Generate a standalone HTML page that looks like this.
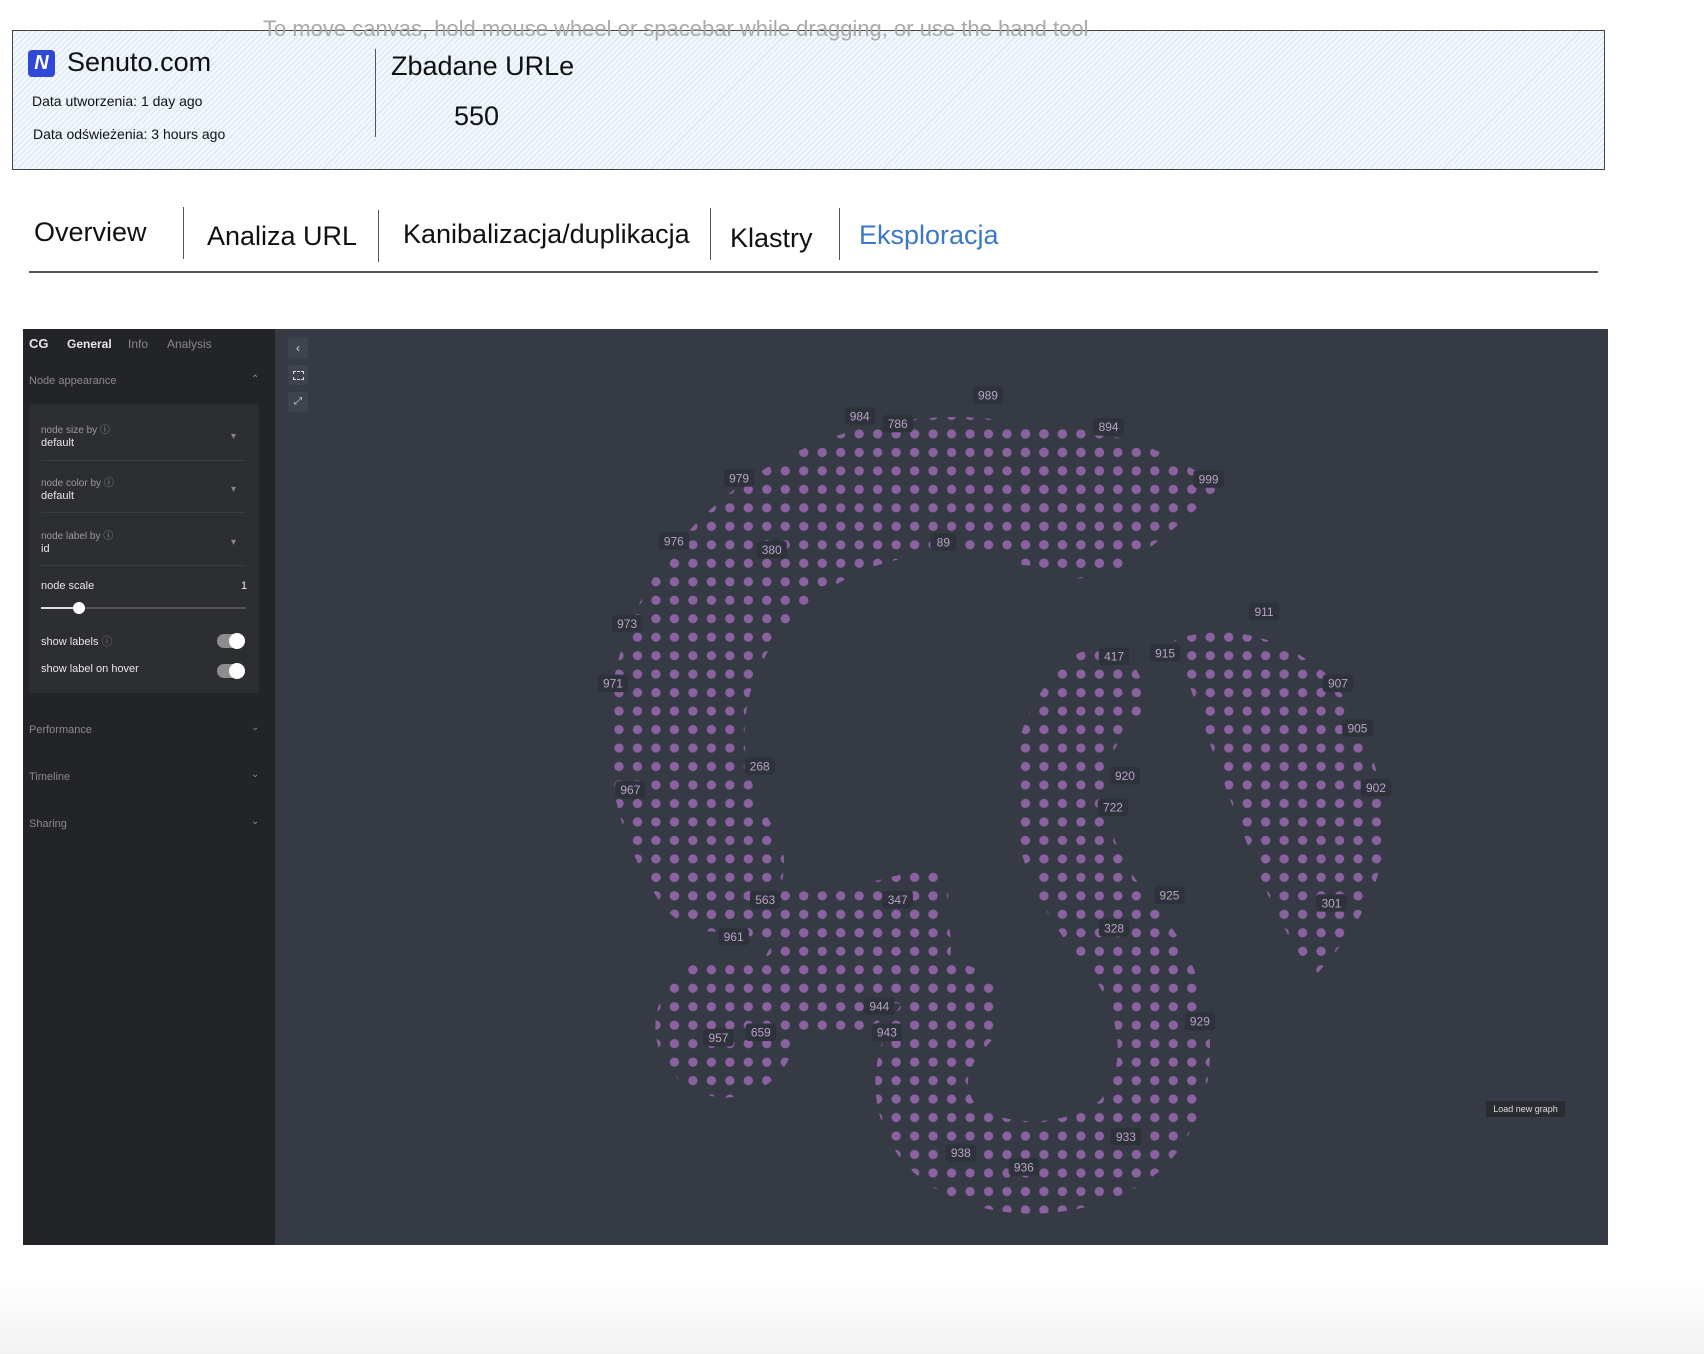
<!DOCTYPE html>
<html><head><meta charset="utf-8"><style>
*{margin:0;padding:0;box-sizing:border-box}
body{width:1704px;height:1354px;position:relative;overflow:hidden;background:linear-gradient(#fff 0,#fff 1280px,#f2f2f2 1354px);font-family:"Liberation Sans",sans-serif}
.a{position:absolute;white-space:nowrap}
#hdr{position:absolute;left:12px;top:30px;width:1593px;height:140px;border:1px solid #444;background:repeating-linear-gradient(135deg,#dde9f6 0 1.5px,#f5f9fd 1.5px 4px)}
.tab{position:absolute;top:214px;font-size:27px;color:#111}
.vd{position:absolute;width:1px;background:#555}
#side{position:absolute;left:23px;top:329px;width:252px;height:916px;background:#232427;color:#ddd;font-size:11px}
#side .a{color:#e6e6e6}
.g{color:#8a8a8a!important}
.lbl{color:#9a9a9a!important;font-size:10px}
.ch{color:#888!important;font-size:10px}
.tg{position:absolute;width:28px;height:14px;border-radius:7px;background:#8d8d8d}
.tg::after{content:"";position:absolute;right:0;top:-1px;width:16px;height:16px;border-radius:50%;background:#fff}
.btn{position:absolute;left:288px;width:20px;height:20px;background:#3f434e;border-radius:3px;color:#ddd;font-size:12px;text-align:center;line-height:20px}
</style></head><body>
<div id="hdr"></div>
<div class="a" style="left:263px;top:16px;font-size:22px;color:#a9a9a9">To move canvas, hold mouse wheel or spacebar while dragging, or use the hand tool</div>
<div class="a" style="left:28px;top:50px;width:27px;height:27px;background:#2f48d8;border-radius:4px;color:#fff;font-weight:bold;font-size:20px;font-style:italic;text-align:center;line-height:27px">N</div>
<div class="a" style="left:67px;top:47px;font-size:27px;color:#111">Senuto.com</div>
<div class="a" style="left:32px;top:93px;font-size:14px;color:#111">Data utworzenia: 1 day ago</div>
<div class="a" style="left:33px;top:126px;font-size:14px;color:#111">Data odświeżenia: 3 hours ago</div>
<div class="vd" style="left:375px;top:49px;height:88px"></div>
<div class="a" style="left:391px;top:51px;font-size:27px;color:#111">Zbadane URLe</div>
<div class="a" style="left:454px;top:101px;font-size:27px;color:#111">550</div>

<div class="tab" style="left:34px;top:217px">Overview</div>
<div class="vd" style="left:183px;top:207px;height:52px"></div>
<div class="tab" style="left:207px;top:221px">Analiza URL</div>
<div class="vd" style="left:378px;top:210px;height:52px"></div>
<div class="tab" style="left:403px;top:219px">Kanibalizacja/duplikacja</div>
<div class="vd" style="left:710px;top:208px;height:52px"></div>
<div class="tab" style="left:730px;top:223px">Klastry</div>
<div class="vd" style="left:839px;top:208px;height:52px"></div>
<div class="tab" style="left:859px;top:220px;color:#3a78c8">Eksploracja</div>
<div class="a" style="left:29px;top:271px;width:1569px;height:1.5px;background:#555"></div>

<div id="side">
<div class="a" style="left:6px;top:7px;font-size:13px;font-weight:bold">CG</div>
<div class="a" style="left:44px;top:8px;font-size:12px;font-weight:bold">General</div>
<div class="a g" style="left:105px;top:8px;font-size:12px">Info</div>
<div class="a g" style="left:144px;top:8px;font-size:12px">Analysis</div>
<div class="a g" style="left:6px;top:46px;font-size:11px">Node appearance</div>
<div class="a ch" style="left:228px;top:45px">&#8963;</div>
<div class="a" style="left:6px;top:75px;width:230px;height:289px;background:#2d2e32;border-radius:2px"></div>
<div class="a lbl" style="left:18px;top:92px">node size by ⓘ</div>
<div class="a" style="left:18px;top:108px">default</div>
<div class="a ch" style="left:208px;top:102px">▾</div>
<div class="a" style="left:18px;top:131px;width:205px;height:1px;background:#3c3d42"></div>
<div class="a lbl" style="left:18px;top:145px">node color by ⓘ</div>
<div class="a" style="left:18px;top:161px">default</div>
<div class="a ch" style="left:208px;top:155px">▾</div>
<div class="a" style="left:18px;top:183px;width:205px;height:1px;background:#3c3d42"></div>
<div class="a lbl" style="left:18px;top:198px">node label by ⓘ</div>
<div class="a" style="left:18px;top:214px">id</div>
<div class="a ch" style="left:208px;top:208px">▾</div>
<div class="a" style="left:18px;top:236px;width:205px;height:1px;background:#3c3d42"></div>
<div class="a" style="left:18px;top:251px">node scale</div>
<div class="a" style="left:218px;top:251px">1</div>
<div class="a" style="left:18px;top:278px;width:205px;height:2px;background:#555"></div>
<div class="a" style="left:18px;top:278px;width:38px;height:2px;background:#ddd"></div>
<div class="a" style="left:50px;top:273px;width:12px;height:12px;border-radius:50%;background:#fff"></div>
<div class="a" style="left:18px;top:304px">show labels <span style="color:#777">ⓘ</span></div>
<div class="tg" style="left:194px;top:305px"></div>
<div class="a" style="left:18px;top:334px">show label on hover</div>
<div class="tg" style="left:194px;top:335px"></div>
<div class="a g" style="left:6px;top:395px">Performance</div><div class="a ch" style="left:228px;top:393px">&#8964;</div>
<div class="a g" style="left:6px;top:442px">Timeline</div><div class="a ch" style="left:228px;top:440px">&#8964;</div>
<div class="a g" style="left:6px;top:489px">Sharing</div><div class="a ch" style="left:228px;top:487px">&#8964;</div>
</div>

<div class="a" style="left:275px;top:329px;width:1333px;height:916px;background:#363a45"></div>
<svg class="a" style="left:275px;top:329px" width="1333" height="916" viewBox="253 303 1226.5 842.7">
<defs>
<pattern id="d" width="17" height="17" patternUnits="userSpaceOnUse"><circle cx="8.5" cy="8.5" r="4.3" fill="#8b62a0"/></pattern>
</defs>
<g fill="none" stroke="url(#d)" stroke-linecap="round">
<path d="M990,470 A255,230 0 0 0 659,795" stroke-width="125"/>
<path d="M625,815 C680,850 760,850 850,822" stroke-width="45"/>
<path d="M1010,640 C950,700 970,790 1030,860 C1080,920 1085,1000 1040,1045 C990,1085 900,1085 862,1040 C835,1000 850,960 880,930" stroke-width="85"/>
</g>
<g fill="url(#d)">
<path d="M940,388 Q1070,400 1120,450 Q1080,490 1025,528 L940,520 Z"/>
<path d="M1080,590 C1100,580 1160,570 1220,620 C1255,660 1275,720 1275,770 C1270,820 1245,860 1210,898 C1180,860 1160,810 1145,770 C1125,720 1105,660 1080,590 Z"/>
<ellipse cx="668" cy="945" rx="65" ry="65"/>
<ellipse cx="765" cy="900" rx="65" ry="55"/>
<ellipse cx="835" cy="870" rx="40" ry="55"/>
</g>
<g font-family="Liberation Sans,sans-serif" font-size="11" fill="#b9a3c6" text-anchor="middle">
<g fill="#2e323b"><rect x="895" y="356" width="28" height="16" rx="3"/><rect x="777" y="375" width="28" height="16" rx="3"/><rect x="812" y="382" width="28" height="16" rx="3"/><rect x="1006" y="385" width="28" height="16" rx="3"/><rect x="1098" y="433" width="28" height="16" rx="3"/><rect x="666" y="432" width="28" height="16" rx="3"/><rect x="606" y="490" width="28" height="16" rx="3"/><rect x="696" y="498" width="28" height="16" rx="3"/><rect x="856" y="491" width="24" height="16" rx="3"/><rect x="563" y="566" width="28" height="16" rx="3"/><rect x="550" y="621" width="28" height="16" rx="3"/><rect x="1149" y="555" width="28" height="16" rx="3"/><rect x="1011" y="596" width="28" height="16" rx="3"/><rect x="1058" y="593" width="28" height="16" rx="3"/><rect x="1217" y="621" width="28" height="16" rx="3"/><rect x="1235" y="662" width="28" height="16" rx="3"/><rect x="1252" y="717" width="28" height="16" rx="3"/><rect x="1021" y="706" width="28" height="16" rx="3"/><rect x="1010" y="735" width="28" height="16" rx="3"/><rect x="685" y="697" width="28" height="16" rx="3"/><rect x="566" y="719" width="28" height="16" rx="3"/><rect x="1062" y="816" width="28" height="16" rx="3"/><rect x="1211" y="823" width="28" height="16" rx="3"/><rect x="1011" y="846" width="28" height="16" rx="3"/><rect x="690" y="820" width="28" height="16" rx="3"/><rect x="812" y="820" width="28" height="16" rx="3"/><rect x="661" y="854" width="28" height="16" rx="3"/><rect x="795" y="918" width="28" height="16" rx="3"/><rect x="802" y="942" width="28" height="16" rx="3"/><rect x="1090" y="932" width="28" height="16" rx="3"/><rect x="686" y="942" width="28" height="16" rx="3"/><rect x="647" y="947" width="28" height="16" rx="3"/><rect x="1022" y="1038" width="28" height="16" rx="3"/><rect x="870" y="1053" width="28" height="16" rx="3"/><rect x="928" y="1066" width="28" height="16" rx="3"/></g>
<text x="909" y="368">989</text><text x="791" y="387">984</text><text x="826" y="394">786</text><text x="1020" y="397">894</text><text x="1112" y="445">999</text><text x="680" y="444">979</text><text x="620" y="502">976</text><text x="710" y="510">380</text><text x="868" y="503">89</text><text x="577" y="578">973</text><text x="564" y="633">971</text><text x="1163" y="567">911</text><text x="1025" y="608">417</text><text x="1072" y="605">915</text><text x="1231" y="633">907</text><text x="1249" y="674">905</text><text x="1266" y="729">902</text><text x="1035" y="718">920</text><text x="1024" y="747">722</text><text x="699" y="709">268</text><text x="580" y="731">967</text><text x="1076" y="828">925</text><text x="1225" y="835">301</text><text x="1025" y="858">328</text><text x="704" y="832">563</text><text x="826" y="832">347</text><text x="675" y="866">961</text><text x="809" y="930">944</text><text x="816" y="954">943</text><text x="1104" y="944">929</text><text x="700" y="954">659</text><text x="661" y="959">957</text><text x="1036" y="1050">933</text><text x="884" y="1065">938</text><text x="942" y="1078">936</text>
</g>
</svg>
<div class="btn" style="top:338px">‹</div>
<div class="btn" style="top:365px"><span style="display:inline-block;width:11px;height:9px;border:1px dashed #ddd;vertical-align:middle"></span></div>
<div class="btn" style="top:392px;font-size:10px">⤢</div>
<div class="a" style="left:1486px;top:1101px;width:79px;height:16px;background:#2a2c31;color:#ddd;font-size:9px;text-align:center;line-height:16px">Load new graph</div>
</body></html>
